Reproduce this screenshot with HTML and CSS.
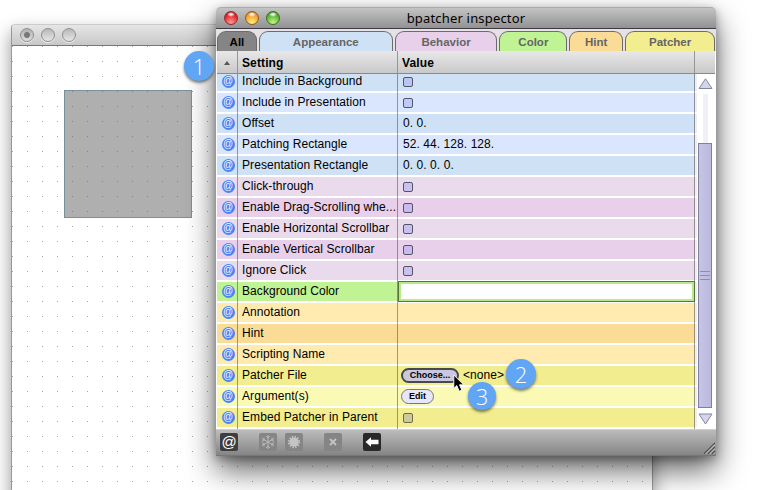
FILE: index.html
```
<!DOCTYPE html>
<html lang="en">
<head>
<meta charset="utf-8">
<title>bpatcher inspector</title>
<link rel="stylesheet" href="styles.css">
</head>
<body>
<main class="desktop">
  <section class="window patcher">
    <header class="patcher-title"><i class="dull dot"></i><i class="dull"></i><i class="dull"></i></header>
    <div class="canvas"><div class="bpatcher"></div></div>
  </section>

  <section class="window inspector">
    <header class="titlebar">
      <div class="lights"><i class="light red"></i><i class="light amber"></i><i class="light green"></i></div>
      <h1>bpatcher inspector</h1>
    </header>
    <nav class="tabs">
      <a class="tab all">All</a>
      <a class="tab appearance">Appearance</a>
      <a class="tab behavior">Behavior</a>
      <a class="tab color">Color</a>
      <a class="tab hint">Hint</a>
      <a class="tab file">Patcher</a>
    </nav>
    <div class="head"><span class="sort"><i></i></span><b class="h-name">Setting</b><b class="h-value">Value</b><span class="h-end"></span></div>
    <div class="body">
      <div class="rows">
        <div class="row blue first"><span class="at"><i>@</i></span><span class="name">Include in Background</span><span class="value"><i class="check"></i></span></div>
        <div class="row sky"><span class="at"><i>@</i></span><span class="name">Include in Presentation</span><span class="value"><i class="check"></i></span></div>
        <div class="row blue"><span class="at"><i>@</i></span><span class="name">Offset</span><span class="value">0. 0.</span></div>
        <div class="row sky"><span class="at"><i>@</i></span><span class="name">Patching Rectangle</span><span class="value">52. 44. 128. 128.</span></div>
        <div class="row blue"><span class="at"><i>@</i></span><span class="name">Presentation Rectangle</span><span class="value">0. 0. 0. 0.</span></div>
        <div class="row mauve"><span class="at"><i>@</i></span><span class="name">Click-through</span><span class="value"><i class="check"></i></span></div>
        <div class="row pink"><span class="at"><i>@</i></span><span class="name">Enable Drag-Scrolling whe...</span><span class="value"><i class="check"></i></span></div>
        <div class="row mauve"><span class="at"><i>@</i></span><span class="name">Enable Horizontal Scrollbar</span><span class="value"><i class="check"></i></span></div>
        <div class="row pink"><span class="at"><i>@</i></span><span class="name">Enable Vertical Scrollbar</span><span class="value"><i class="check"></i></span></div>
        <div class="row mauve"><span class="at"><i>@</i></span><span class="name">Ignore Click</span><span class="value"><i class="check"></i></span></div>
        <div class="row lime"><span class="at"><i>@</i></span><span class="name">Background Color</span><span class="value"><i class="swatch"></i></span></div>
        <div class="row cream"><span class="at"><i>@</i></span><span class="name">Annotation</span><span class="value"></span></div>
        <div class="row orange"><span class="at"><i>@</i></span><span class="name">Hint</span><span class="value"></span></div>
        <div class="row cream"><span class="at"><i>@</i></span><span class="name">Scripting Name</span><span class="value"></span></div>
        <div class="row yellow"><span class="at"><i>@</i></span><span class="name">Patcher File</span><span class="value"><button class="choose">Choose...</button><span class="none">&lt;none&gt;</span></span></div>
        <div class="row lemon"><span class="at"><i>@</i></span><span class="name">Argument(s)</span><span class="value"><button class="edit">Edit</button></span></div>
        <div class="row yellow"><span class="at"><i>@</i></span><span class="name">Embed Patcher in Parent</span><span class="value"><i class="check"></i></span></div>
      </div>
      <div class="scroll">
        <svg width="15" height="12" viewBox="0 0 15 12"><path d="M1 10.5 7.5 .8 14 10.5Z" fill="#d4d4ea" stroke="#86869a"/></svg>
        <div class="track"></div>
        <div class="thumb"><i></i><i></i><i></i></div>
        <svg width="15" height="12" viewBox="0 0 15 12"><path d="M1 1 7.5 11 14 1Z" fill="#d4d4ea" stroke="#86869a"/></svg>
      </div>
    </div>
    <footer class="toolbar">
      <span class="tool at-tool">@</span>
      <span class="tool snow"><svg width="18" height="18" viewBox="0 0 18 18" fill="none" stroke="#b9b9b9" stroke-width="1"><path d="M9 2v14M2.9 5.5l12.2 7M2.9 12.5l12.2-7M7 3l2 2 2-2M7 15l2-2 2 2M2.8 8.2l2.6-.9-.6-2.8M15.2 8.2l-2.6-.9.6-2.8M2.8 9.8l2.6.9-.6 2.8M15.2 9.8l-2.6.9.6 2.8"/></svg></span>
      <span class="tool burst"><svg width="18" height="18" viewBox="0 0 18 18"><circle cx="9" cy="9" r="4.6" fill="#c4c4c4"/><circle cx="9" cy="9" r="5.2" fill="none" stroke="#c4c4c4" stroke-width="2" stroke-dasharray="1.35 1.37"/></svg></span>
      <span class="tool cross"><svg width="18" height="18" viewBox="0 0 18 18"><path d="M6 6l6 6M12 6l-6 6" stroke="#c4c4c4" stroke-width="1.8"/></svg></span>
      <span class="tool back"><svg width="18" height="18" viewBox="0 0 18 18"><path d="M2.5 9 8 4.2v2.6h7.5v4.4H8v2.6Z" fill="#fff"/></svg></span>
      <svg class="grip" width="12" height="12" viewBox="0 0 12 12"><path d="M1 12 12 1M5 12l7-7M9 12l3-3" stroke="#4b4b4b" stroke-width="1.2"/><path d="M2.5 12 12 2.5M6.5 12 12 6.5M10.5 12l1.5-1.5" stroke="#cfcfcf"/></svg>
    </footer>
  </section>

  <svg class="cursor" width="12" height="19" viewBox="0 0 12 19"><path d="M.8 1v13.4l3-2.8 2.4 5.6 2.6-1.1-2.3-5.3h4.2Z" fill="#000" stroke="#fff" stroke-width=".9"/></svg>
  <span class="badge one">1</span>
  <span class="badge two">2</span>
  <span class="badge three">3</span>
</main>
</body>
</html>
```
FILE: styles.css
```
* { box-sizing: border-box; }
body { margin: 0; background: #fff; font: 12px/18px "Liberation Sans", Arial, sans-serif; color: #000; }
i { font-style: normal; display: block; }
.desktop { position: relative; width: 784px; height: 490px; overflow: hidden; }
.window { position: absolute; }

.patcher { left: 11px; top: 24px; width: 642px; height: 520px; border: 1px solid #999; border-top-color: #ccc; border-radius: 4px 4px 0 0; background: #fff; box-shadow: 0 8px 18px rgba(0,0,0,.42); }
.patcher-title { height: 21px; display: flex; gap: 7px; padding: 3px 0 0 8px; background: linear-gradient(#e6e6e6, #c8c8c8); border-bottom: 1px solid #777; border-radius: 3px 3px 0 0; }
.dull { width: 14px; height: 14px; border-radius: 50%; border: 1px solid #8f8f8f; background: linear-gradient(#b8b8b8, #e6e6e6); box-shadow: 0 1px 0 #eee; }
.dot { background: radial-gradient(circle, #777 0 2.5px, transparent 3.5px), linear-gradient(#b0b0b0, #ddd); }
.canvas { height: 498px; padding: 44px 0 0 52px; background: linear-gradient(90deg, transparent 1px, #fff 1px) 0 0 / 15px 15px, linear-gradient(#a4a4a4 1px, #fff 1px) 0 0 / 15px 15px; }
.bpatcher { width: 128px; height: 128px; border: 1px solid #78909a; background: rgba(95,95,95,.5); }

.inspector { left: 216px; top: 7px; width: 500px; height: 449px; background: #fff; border-radius: 5px 5px 0 0; box-shadow: 0 14px 30px rgba(0,0,0,.62), 0 3px 10px rgba(0,0,0,.3); }
.titlebar { height: 22px; display: grid; grid-template-columns: 70px 360px 70px; background: linear-gradient(#c4c4c4, #929292); border-top: 1px solid #aaa; border-bottom: 1px solid #3e3a42; border-radius: 5px 5px 0 0; }
.lights { display: flex; gap: 7px; padding: 3px 0 0 8px; }
.light { width: 14px; height: 14px; border-radius: 50%; border: 1px solid; }
.red { border-color: #8c2a28; background: radial-gradient(ellipse 4px 2.5px at 50% 20%, rgba(255,255,255,.95) 20%, transparent), radial-gradient(circle at 50% 90%, #ff9a98, #e5242a 65%, #a81618); }
.amber { border-color: #96561f; background: radial-gradient(ellipse 4px 2.5px at 50% 20%, rgba(255,255,255,.95) 20%, transparent), radial-gradient(circle at 50% 90%, #ffef80, #f0a02e 65%, #b86818); }
.green { border-color: #396f22; background: radial-gradient(ellipse 4px 2.5px at 50% 20%, rgba(255,255,255,.95) 20%, transparent), radial-gradient(circle at 50% 90%, #c6f58a, #57b434 65%, #307a1c); }
h1 { margin: 0; font: 13px/20px "Noto Sans", sans-serif; letter-spacing: .18px; text-align: center; color: #000; white-space: nowrap; }

.tabs { height: 22px; display: flex; gap: 2px; padding: 2px 1px 0; background: #e6e1e7; }
.tab { height: 20px; border: 1px solid #6c6c6c; border-bottom: 0; border-radius: 9px 9px 0 0; font-weight: bold; font-size: 11.5px; line-height: 21px; text-align: center; color: #656565; }
.all { width: 40px; background: #858585; color: #000; }
.appearance { width: 134px; background: #cee1f5; }
.behavior { width: 103px; background: #e8cfea; }
.color { width: 68px; background: #c0f394; }
.hint { width: 54px; background: #fbdc96; }
.file { width: 90px; background: #f2ed8f; }

.head { height: 23px; margin: 0 1px; display: flex; line-height: 24px; background: linear-gradient(#e8e8e8, #c9c9c9); border-bottom: 1px solid #8a8a8a; color: #000; }
.head b { letter-spacing: .12px; }
.sort { width: 21px; padding: 10px 0 0 7px; border-right: 1px solid #969696; }
.sort i { width: 0; height: 0; border: 3px solid transparent; border-top: 0; border-bottom: 4px solid #555; }
.h-name { width: 160px; padding-left: 4px; border-right: 1px solid #969696; }
.h-value { width: 297px; padding-left: 4px; border-right: 1px solid #969696; }

.body { display: flex; height: 355px; padding-left: 1px; overflow: hidden; }
.rows { width: 480px; }
.row { height: 21px; display: flex; border-bottom: 2px solid #fff; background-image: linear-gradient(90deg, transparent 478px, #efedef 478px); background-clip: padding-box; position: relative; }
.row::before, .row::after { content: ""; width: 1px; background: rgba(80,80,80,.55); position: absolute; top: 0; bottom: -2px; left: 20px; }
.row::after { left: 180px; box-shadow: 297px 0 0 rgba(80,80,80,.55); }
.first { height: 19px; }
.first .at, .first .name, .first .value { margin-top: -2px; }
.at { width: 21px; padding: 3px 0 0 5px; }
.at i { width: 13px; height: 13px; margin-left: -.5px; border-radius: 50%; background: #4b83f6; color: #f4f8ff; font-size: 10px; line-height: 12px; display: flex; justify-content: center; }
.name { width: 160px; padding-left: 4px; white-space: nowrap; letter-spacing: .07px; }
.value { width: 297px; padding-left: 5px; display: flex; letter-spacing: .07px; }
.check { width: 10px; height: 10px; margin: 5px 0 0; border: 1px solid #555568; border-radius: 2px; background: rgba(145,145,245,.35); }
.yellow .check { background: #cfca9a; border-color: #6e6b50; }
.swatch { width: 297px; height: 21px; margin: -1px 0 -2px -5px; border: 1px solid #587244; background: #fff; box-shadow: inset 0 0 0 2px #b8ea8c; position: relative; z-index: 1; flex: none; }
.blue { background-color: #cee1f5; }
.sky { background-color: #d9e6fd; }
.mauve { background-color: #e9dbec; }
.pink { background-color: #e8cfea; }
.lime { background-color: #c0f394; }
.cream { background-color: #ffeab0; }
.orange { background-color: #fbdc96; }
.yellow { background-color: #f2ed8f; }
.lemon { background-color: #fafab5; }
button { font: bold 9px/11px "Liberation Sans", Arial, sans-serif; color: #000; padding: 0; border-radius: 8px; letter-spacing: 0; }
.choose { width: 58px; height: 15px; margin: 2px 4px 0 -2px; border: 2px solid #494949; background: #c9c8df; }
.edit { width: 33px; height: 15px; margin: 2px 0 0 -2px; border: 1px solid #777; background: #e7e6fb; }

.scroll { width: 16px; display: flex; flex-direction: column; align-items: center; padding-top: 4px; }
.scroll svg { flex: none; }
.track { width: 5px; height: 49px; margin-top: 4px; background: #f1f0f8; flex: none; }
.thumb { width: 14px; height: 265px; margin-bottom: 5px; border: 1px solid #7f7fa0; background: linear-gradient(90deg, #c6c5e4, #bbb9dd); padding: 127px 1px 0; display: grid; align-content: start; gap: 3px; flex: none; }
.thumb i { height: 1px; background: #8d8dac; }

.toolbar { height: 27px; display: flex; align-items: flex-start; padding: 3px 0 0 4px; background: linear-gradient(#bcbcbc, #858585); border-top: 1px solid #cfcfcf; border-bottom: 1px solid #777; position: relative; }
.tool { width: 18px; height: 18px; border-radius: 2px; background: #858585; }
.tool svg { display: block; }
.back { margin-left: 21px; background: #292929; }
.at-tool { background: #3d3e3d; color: #fff; font-size: 15px; line-height: 17px; display: flex; justify-content: center; }
.snow { margin-left: 21px; }
.burst { margin-left: 8px; }
.cross { margin-left: 21px; }
.grip { position: absolute; right: 1px; bottom: 1px; }

.cursor { position: absolute; left: 453px; top: 374px; }
.badge { position: absolute; width: 30px; height: 30px; border-radius: 50%; background: #61a5f5; color: #fff; font: 300 22px/31px "Open Sans", sans-serif; text-align: center; box-shadow: 0 2px 3px rgba(0,0,0,.5); }
.one { left: 184px; top: 51px; }
.two { left: 506px; top: 359px; }
.three { left: 468px; top: 382px; width: 28px; height: 28px; line-height: 28px; }
```
